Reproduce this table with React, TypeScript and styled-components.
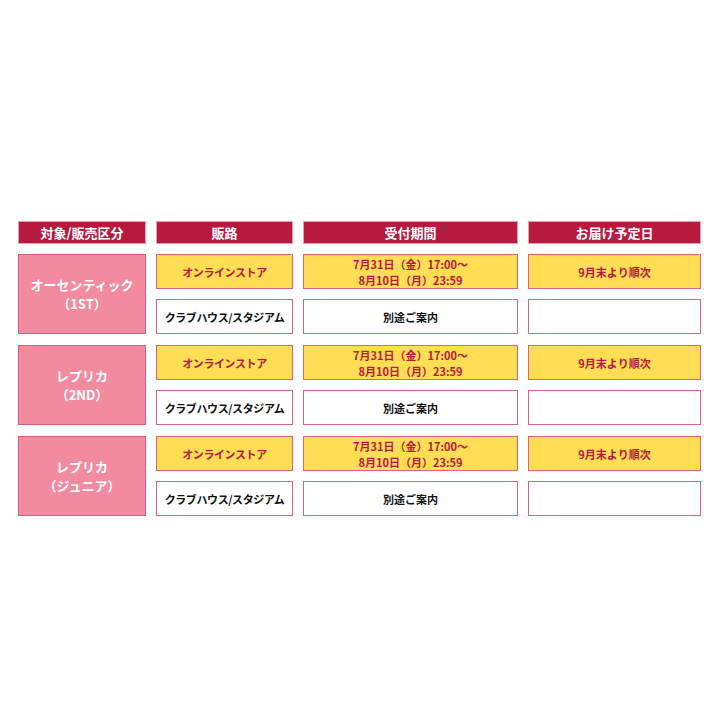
import React from 'react';
import styled, { createGlobalStyle } from 'styled-components';

const GlobalStyle = createGlobalStyle`
    body {
        margin: 0;
        background: #ffffff;
        font-family: "Noto Sans CJK JP", "Noto Sans", sans-serif;
    }
`;

const Page = styled.div`
    width: 720px;
    height: 720px;
    box-sizing: border-box;
    padding: 221px 0 0 18px;
`;

const Table = styled.div`
    display: flex;
    flex-direction: column;
    gap: 11px;
`;

const cols = '128px 137px 215px 173px';

const HeaderRow = styled.div`
    display: grid;
    grid-template-columns: ${cols};
    column-gap: 10px;
    margin-bottom: -1px;
`;

const HeaderCell = styled.div`
    height: 23px;
    box-sizing: border-box;
    background: #b8193f;
    border: 1px solid #e7a0b0;
    color: #ffffff;
    font-size: 13px;
    font-weight: 700;
    display: flex;
    align-items: center;
    justify-content: center;
`;

const Group = styled.div`
    display: grid;
    grid-template-columns: ${cols};
    grid-template-rows: 35px 35px;
    column-gap: 10px;
    row-gap: 10px;
`;

const Cell = styled.div<{ $tone: 'store' | 'other' }>`
    box-sizing: border-box;
    border: 1px solid #e0637c;
    background: ${(p) => (p.$tone === 'store' ? '#ffdd55' : '#ffffff')};
    color: ${(p) => (p.$tone === 'store' ? '#b8193f' : '#111111')};
    font-size: 11px;
    font-weight: 700;
    line-height: 16px;
    display: flex;
    flex-direction: column;
    align-items: center;
    justify-content: center;
    text-align: center;
`;

const Kana = styled.span`
    letter-spacing: -0.4px;
`;

const TypeCell = styled.div`
    grid-row: span 2;
    box-sizing: border-box;
    background: #f38ba0;
    border: 1px solid #dc5c78;
    color: #ffffff;
    font-size: 13px;
    font-weight: 700;
    line-height: 19px;
    display: flex;
    flex-direction: column;
    align-items: center;
    justify-content: center;
`;

const groups = [
    { name: 'オーセンティック', sub: '（1ST）' },
    { name: 'レプリカ', sub: '（2ND）' },
    { name: 'レプリカ', sub: '（ジュニア）' },
];

const App = () => {
    return (
        <Page>
            <GlobalStyle />
            <Table>
                <HeaderRow>
                    <HeaderCell>対象/販売区分</HeaderCell>
                    <HeaderCell>販路</HeaderCell>
                    <HeaderCell>受付期間</HeaderCell>
                    <HeaderCell>お届け予定日</HeaderCell>
                </HeaderRow>
                {groups.map((g, i) => (
                    <Group key={i}>
                        <TypeCell>
                            <span>{g.name}</span>
                            <span>{g.sub}</span>
                        </TypeCell>
                        <Cell $tone="store">
                            <Kana>オンラインストア</Kana>
                        </Cell>
                        <Cell $tone="store">
                            <span>7月31日（金）17:00〜</span>
                            <span>8月10日（月）23:59</span>
                        </Cell>
                        <Cell $tone="store">9月末より順次</Cell>
                        <Cell $tone="other">
                            <Kana>クラブハウス/スタジアム</Kana>
                        </Cell>
                        <Cell $tone="other">別途ご案内</Cell>
                        <Cell $tone="other" />
                    </Group>
                ))}
            </Table>
        </Page>
    );
};

export default App;
